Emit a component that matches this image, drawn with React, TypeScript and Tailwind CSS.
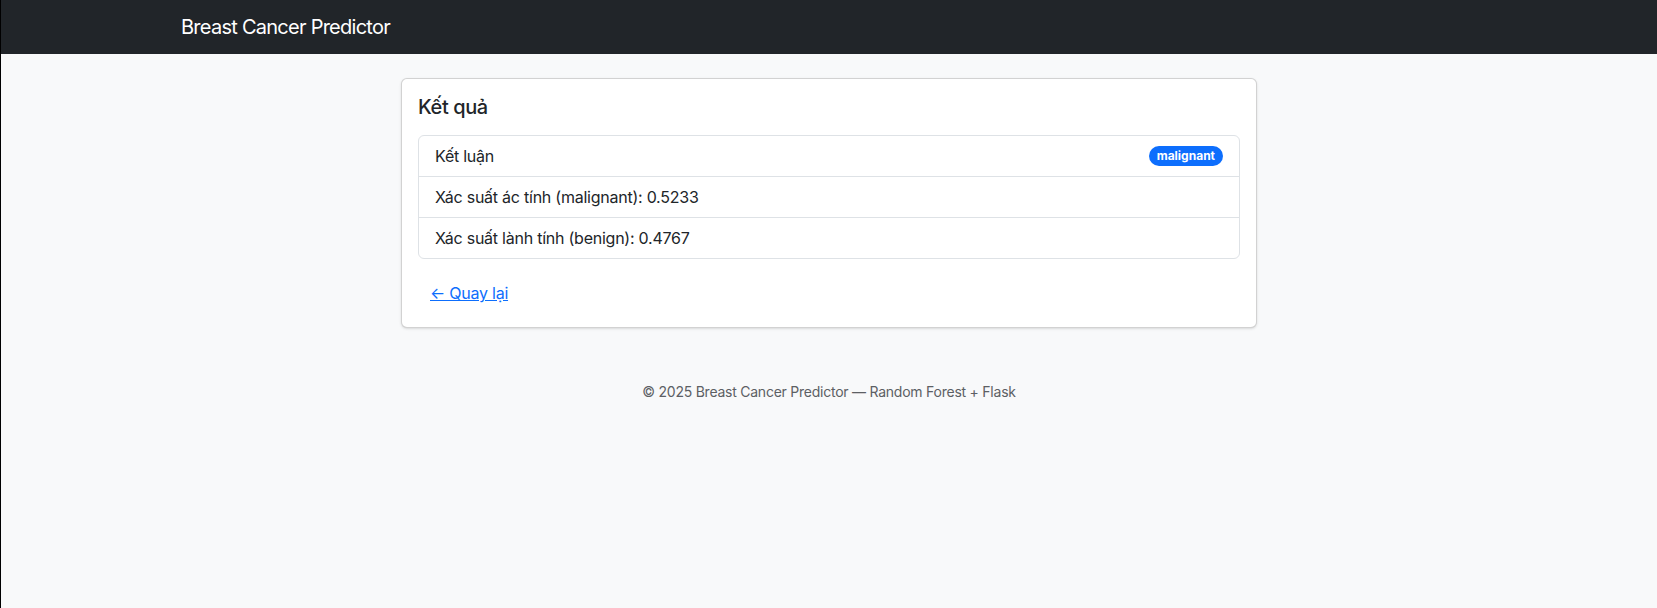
export default function App() {
  return (
    <div
      className="min-h-screen bg-[#f8f9fa] border-l border-black text-[#212529] tracking-[-0.015em]"
      style={{ fontFamily: 'Inter, "Noto Sans", sans-serif' }}
    >
      {/* Navbar */}
      <nav className="h-[54px] bg-[#212529] flex items-center">
        <div className="w-[1320px] mx-auto px-3">
          <span className="text-[20px] leading-[30px] text-white tracking-[-0.037em]">Breast Cancer Predictor</span>
        </div>
      </nav>

      {/* Result card */}
      <main className="w-[856px] mx-auto mt-6">
        <div className="bg-white border border-black/[0.175] rounded-md shadow-sm p-4">
          <h5 className="text-[20px] leading-6 font-medium mb-4 tracking-[-0.02em]">Kết quả</h5>

          <ul className="border border-[#dee2e6] rounded-md text-base leading-6">
            <li className="px-4 py-2 flex items-center justify-between">
              <span>Kết luận</span>
              <span className="bg-[#0d6efd] text-white text-[12px] font-bold leading-none tracking-normal rounded-full px-[8px] py-[4px]">
                malignant
              </span>
            </li>
            <li className="px-4 py-2 border-t border-[#dee2e6]">
              Xác suất ác tính (malignant): 0.5233
            </li>
            <li className="px-4 py-2 border-t border-[#dee2e6]">
              Xác suất lành tính (benign): 0.4767
            </li>
          </ul>

          <a href="#" className="inline-block mt-4 px-3 py-1.5 text-base leading-6 text-[#0d6efd] underline">
            ← Quay lại
          </a>
        </div>
      </main>

      {/* Footer */}
      <footer className="text-center text-sm leading-[21px] text-[#5c6064] mt-[53px]">
        © 2025 Breast Cancer Predictor — Random Forest + Flask
      </footer>
    </div>
  );
}
